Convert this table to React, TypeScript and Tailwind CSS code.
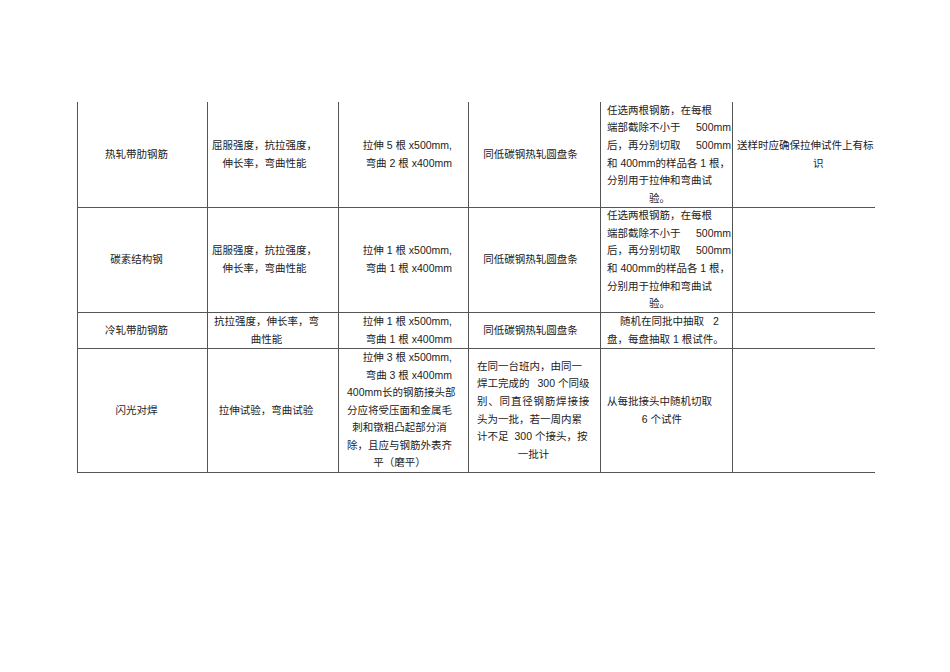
import React from "react";

const cellBase =
  "flex items-center whitespace-nowrap border-l border-b border-[#555] text-[10.5px] leading-[17.6px] text-[#222]";

const Cell: React.FC<{ className?: string; children?: React.ReactNode }> = ({
  className = "",
  children,
}) => <div className={`${cellBase} ${className}`}>{children}</div>;

// 钢筋取样说明 column (justified-looking lines)
const SampleNote = () => (
  <div className="w-[124px] text-left">
    <div>任选两根钢筋，在每根</div>
    <div className="flex justify-between">
      <span>端部截除不小于</span>
      <span>500mm</span>
    </div>
    <div className="flex justify-between">
      <span>后，再分别切取</span>
      <span>500mm</span>
    </div>
    <div>和 400mm的样品各 1 根，</div>
    <div>分别用于拉伸和弯曲试</div>
    <div className="w-[105px] text-center">验。</div>
  </div>
);

const Props = () => (
  <div className="w-[105px] text-center">
    <div>屈服强度，抗拉强度，</div>
    <div>伸长率，弯曲性能</div>
  </div>
);

const Spec: React.FC<{ a: string; b: string }> = ({ a, b }) => (
  <div className="w-[105px] text-right">
    <div>拉伸 {a} 根 x500mm,</div>
    <div>弯曲 {b} 根 x400mm</div>
  </div>
);

export default function App() {
  return (
    <div className="min-h-[672px] w-[950px] bg-white pl-[77px] pt-[102px] font-['Liberation_Sans','Noto_Sans_CJK_SC',sans-serif]">
      <div className="grid grid-cols-[130px_131px_130px_132px_132px_143px] grid-rows-[106px_105px_36px_124px]">
        {/* 热轧带肋钢筋 */}
        <Cell className="justify-center pr-[12px]">热轧带肋钢筋</Cell>
        <Cell className="pl-[4px]">
          <Props />
        </Cell>
        <Cell className="pl-[8px]">
          <Spec a="5" b="2" />
        </Cell>
        <Cell className="justify-center pr-[8px]">同低碳钢热轧圆盘条</Cell>
        <Cell className="pl-[6px]">
          <SampleNote />
        </Cell>
        <Cell className="pl-[4px]">
          <div className="w-[136px] text-left">
            <div>送样时应确保拉伸试件上有标</div>
            <div className="pl-[76px]">识</div>
          </div>
        </Cell>

        {/* 碳素结构钢 */}
        <Cell className="justify-center pr-[12px]">碳素结构钢</Cell>
        <Cell className="pl-[4px]">
          <Props />
        </Cell>
        <Cell className="pl-[8px]">
          <Spec a="1" b="1" />
        </Cell>
        <Cell className="justify-center pr-[8px]">同低碳钢热轧圆盘条</Cell>
        <Cell className="pl-[6px]">
          <SampleNote />
        </Cell>
        <Cell />

        {/* 冷轧带肋钢筋 */}
        <Cell className="justify-center pr-[12px]">冷轧带肋钢筋</Cell>
        <Cell className="pl-[6px]">
          <div className="w-[105px] text-center">
            <div>抗拉强度，伸长率，弯</div>
            <div>曲性能</div>
          </div>
        </Cell>
        <Cell className="pl-[8px]">
          <Spec a="1" b="1" />
        </Cell>
        <Cell className="justify-center pr-[8px]">同低碳钢热轧圆盘条</Cell>
        <Cell className="pl-[6px]">
          <div className="w-[124px] text-left">
            <div className="pl-[13px]">
              随机在同批中抽取<span className="ml-[9px]">2</span>
            </div>
            <div>盘，每盘抽取 1 根试件。</div>
          </div>
        </Cell>
        <Cell />

        {/* 闪光对焊 */}
        <Cell className="justify-center pr-[12px]">闪光对焊</Cell>
        <Cell className="justify-center pr-[14px]">拉伸试验，弯曲试验</Cell>
        <Cell className="pl-[8px]">
          <div className="w-[105px]">
            <div className="text-right">拉伸 3 根 x500mm,</div>
            <div className="text-right">弯曲 3 根 x400mm</div>
            <div>400mm长的钢筋接头部</div>
            <div>分应将受压面和金属毛</div>
            <div className="text-center">刺和镦粗凸起部分消</div>
            <div>除，且应与钢筋外表齐</div>
            <div className="text-center">平（磨平）</div>
          </div>
        </Cell>
        <Cell className="pl-[8px]">
          <div className="w-[113px] text-left">
            <div>在同一台班内，由同一</div>
            <div>
              焊工完成的<span className="ml-[8px]">300 个同级</span>
            </div>
            <div className="tracking-[0.8px]">别、同直径钢筋焊接接</div>
            <div>头为一批，若一周内累</div>
            <div>
              计不足<span className="ml-[6px]">300 个接头，按</span>
            </div>
            <div className="text-center">一批计</div>
          </div>
        </Cell>
        <Cell className="pl-[6px]">
          <div className="w-[105px] text-left">
            <div>从每批接头中随机切取</div>
            <div className="pl-[5px] text-center">6 个试件</div>
          </div>
        </Cell>
        <Cell />
      </div>
    </div>
  );
}
